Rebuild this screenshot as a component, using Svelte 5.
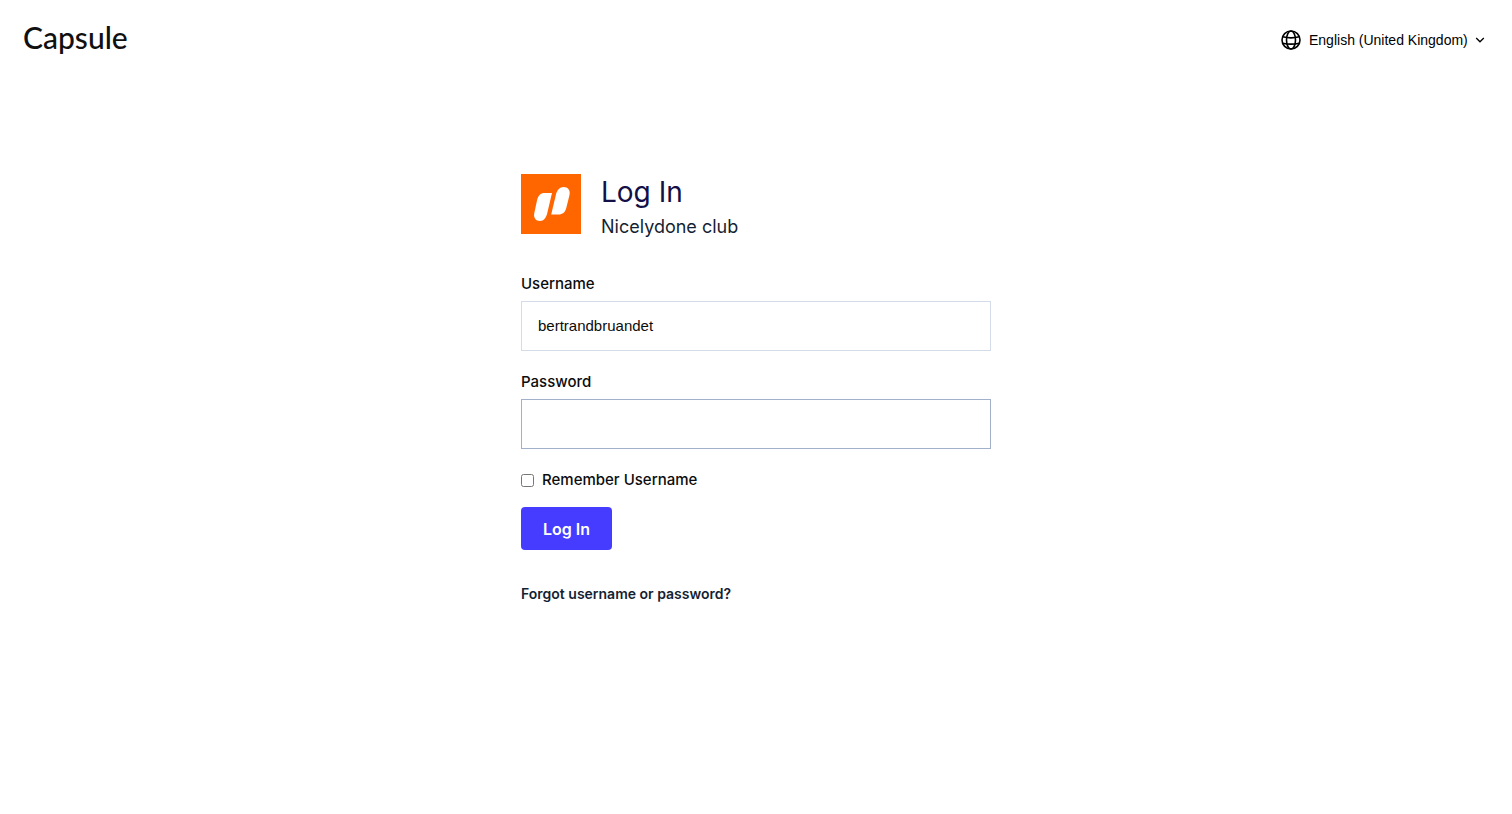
<script lang="ts">
	let username = $state('bertrandbruandet');
	let password = $state('');
	let remember = $state(false);
	let locale = $state('en-GB');

	const locales = [{ code: 'en-GB', name: 'English (United Kingdom)' }];
</script>

<header class="topbar">
	<a class="brand" href="/">Capsule</a>

	<label class="locale">
		<svg class="globe" viewBox="0 0 20 20" aria-hidden="true">
			<circle cx="10" cy="10" r="9" />
			<ellipse cx="10" cy="10" rx="4.5" ry="9" />
			<path d="M1.7 6.8Q10 9 18.3 6.8M1.7 13.2Q10 15 18.3 13.2" />
		</svg>
		<select bind:value={locale} aria-label="Language">
			{#each locales as l (l.code)}
				<option value={l.code}>{l.name}</option>
			{/each}
		</select>
		<svg class="chevron" viewBox="0 0 10 6" aria-hidden="true">
			<path d="M1.2 1 5 4.8 8.8 1" />
		</svg>
	</label>
</header>

<main>
	<div class="account">
		<svg class="logo" viewBox="0 0 60 60" aria-hidden="true">
			<rect width="60" height="60" fill="#ff6600" />
			<path
				fill="#fff"
				d="M23.5 19H31L26.4 38.5C25.3 43.8 22.7 47 19 47C14.8 47 12.2 43.5 13.3 39L16 26.5C17.1 21.5 19.5 19 23.5 19Z"
			/>
			<path
				fill="#fff"
				d="M30.2 40.5L34.8 21.2C36 16 38.8 13 42.5 13C47 13 49.6 16.5 48.5 21L45.4 33.5C44.2 38.5 41.5 40.5 37.5 40.5Z"
			/>
		</svg>
		<div>
			<h1>Log In</h1>
			<p>Nicelydone club</p>
		</div>
	</div>

	<form onsubmit={(e) => e.preventDefault()}>
		<label class="caption" for="username">Username</label>
		<input class="field" id="username" type="text" bind:value={username} />

		<label class="caption" for="password">Password</label>
		<input class="field active" id="password" type="password" bind:value={password} />

		<label class="remember">
			<input type="checkbox" bind:checked={remember} />
			Remember Username
		</label>

		<button type="submit">Log In</button>
	</form>

	<a class="forgot" href="/forgot">Forgot username or password?</a>
</main>

<style>
	:global(body) {
		margin: 0;
		background: #fff;
		color: #0c0c0d;
		font-family: Inter, sans-serif;
	}

	.topbar {
		display: flex;
		align-items: center;
		justify-content: space-between;
		height: 80px;
		padding: 0 27px 0 23px;
	}
	.brand {
		padding-bottom: 6px;
		font-family: Lato, sans-serif;
		font-size: 30px;
		font-weight: 500;
		line-height: 40px;
		color: #101010;
		text-decoration: none;
	}
	.locale {
		display: flex;
		align-items: center;
	}
	.locale svg {
		fill: none;
		stroke: #000;
	}
	.globe {
		width: 20px;
		height: 20px;
		margin-right: 8px;
		stroke-width: 1.6;
	}
	.chevron {
		width: 10px;
		height: 6px;
		margin-left: 7px;
		stroke-width: 1.3;
	}
	select {
		appearance: none;
		margin: 0;
		padding: 0;
		border: 0;
		background: none;
		color: #000;
		font-family: 'Liberation Sans', Arial, sans-serif;
		font-size: 14px;
		line-height: 20px;
	}

	main {
		box-sizing: border-box;
		max-width: 470px;
		margin: 0 auto;
		padding: 94px 0 40px;
	}
	.account {
		display: flex;
		gap: 20px;
		margin-bottom: 34px;
	}
	.logo {
		width: 60px;
		height: 60px;
	}
	h1 {
		margin: 0;
		font-size: 28px;
		font-weight: 400;
		line-height: 36px;
		color: #130f47;
	}
	p {
		margin: 4px 0 0;
		font-size: 18px;
		line-height: 26px;
		color: #151f33;
	}

	form {
		display: flex;
		flex-direction: column;
		align-items: flex-start;
	}
	.caption {
		margin-bottom: 7px;
		font-size: 15px;
		font-weight: 500;
		line-height: 20px;
	}
	.field {
		box-sizing: border-box;
		width: 100%;
		height: 50px;
		margin: 0 0 21px;
		padding: 0 16px 2px;
		border: 1px solid #d3dce8;
		border-radius: 0;
		background: #fff;
		color: #0c0c0d;
		font-family: 'Liberation Sans', Arial, sans-serif;
		font-size: 15px;
		outline: none;
	}
	.field.active {
		border-color: #a3b0cc;
	}
	.remember {
		display: flex;
		align-items: center;
		gap: 8px;
		font-size: 15px;
		font-weight: 500;
		line-height: 20px;
	}
	.remember input {
		width: 13px;
		height: 13px;
		margin: 0;
	}
	button {
		height: 43px;
		margin: 17px 0 33px;
		padding: 0 22px;
		border: 0;
		border-radius: 4px;
		background: #463cff;
		color: #fff;
		font-family: Inter, sans-serif;
		font-size: 16px;
		font-weight: 600;
	}
	.forgot {
		font-size: 14px;
		font-weight: 600;
		line-height: 20px;
		color: #151f33;
		text-decoration: none;
	}
</style>
